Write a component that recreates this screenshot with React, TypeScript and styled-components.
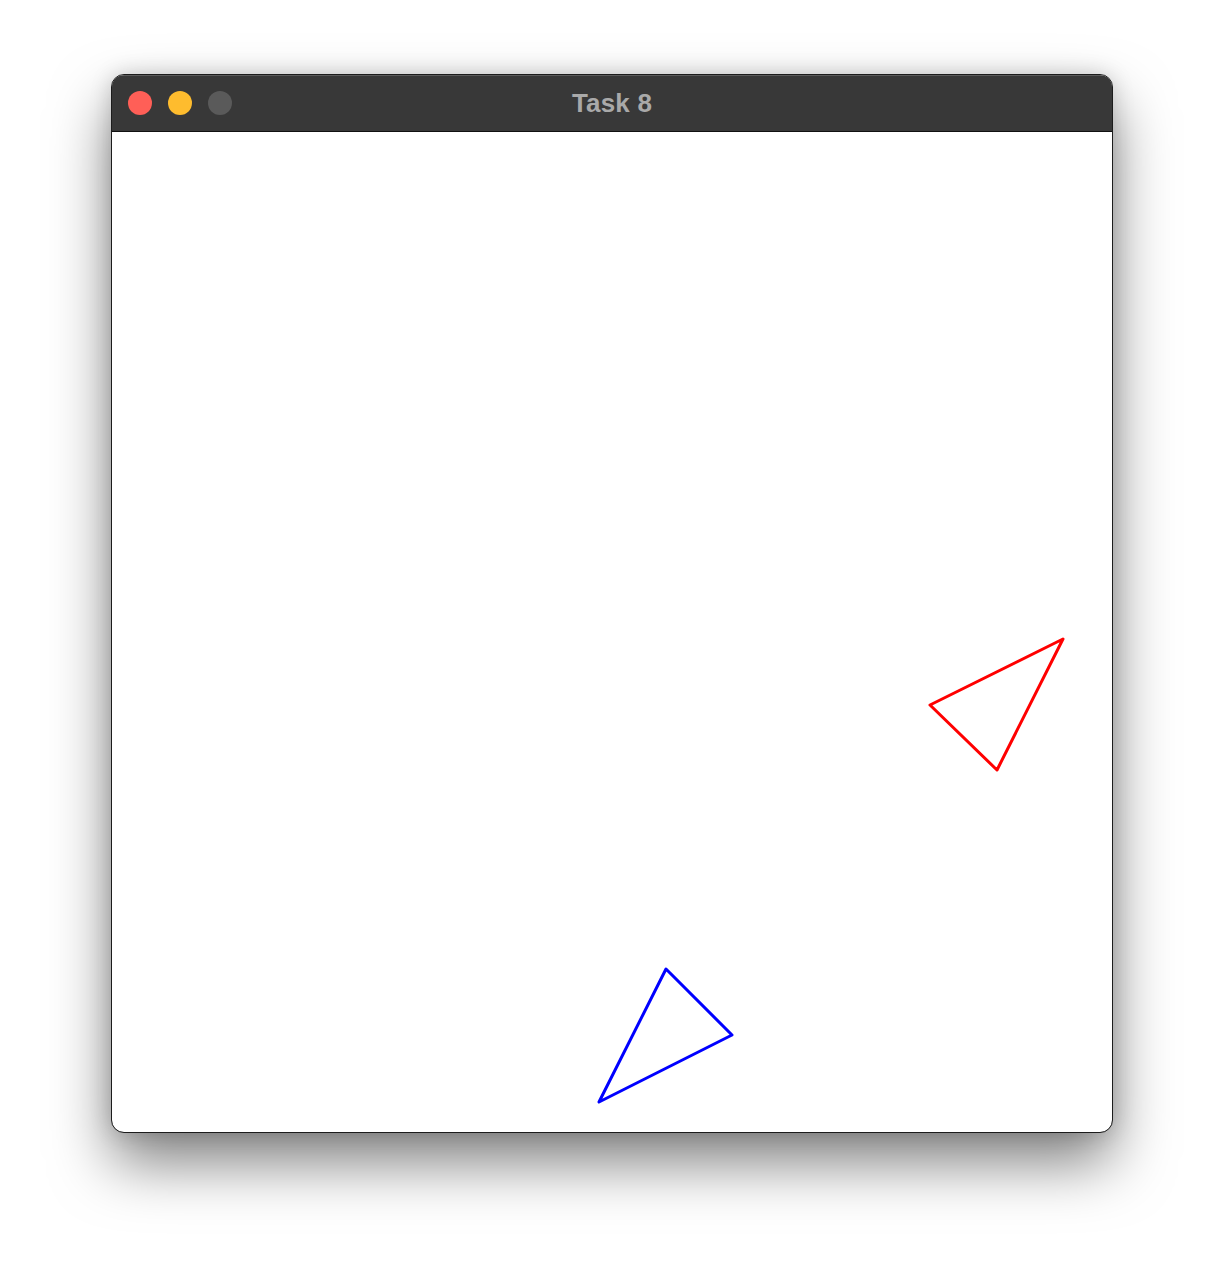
import React from "react";
import styled, { createGlobalStyle } from "styled-components";

const GlobalStyle = createGlobalStyle`
  html, body {
    margin: 0;
    padding: 0;
    background: #ffffff;
  }
`;

const Page = styled.div`
  display: flex;
  justify-content: center;
  align-items: flex-start;
  padding-top: 75px;
  height: 1280px;
  box-sizing: border-box;
  overflow: hidden;
`;

const Window = styled.div`
  width: 1000px;
  display: flex;
  flex-direction: column;
  border-radius: 12px;
  overflow: hidden;
  outline: 1px solid #1c1c1c;
  box-shadow: 0 30px 60px rgba(0, 0, 0, 0.5), 0 0 22px rgba(0, 0, 0, 0.18);
  background: #ffffff;
`;

const TitleBar = styled.div`
  height: 56px;
  position: relative;
  display: flex;
  align-items: center;
  justify-content: center;
  background: #383838;
  border-bottom: 1px solid #111111;
  box-shadow: inset 0 1px 0 rgba(255, 255, 255, 0.18);
`;

const Lights = styled.div`
  position: absolute;
  left: 16px;
  top: 16px;
  display: flex;
  gap: 16px;
`;

const Light = styled.span<{ $color: string }>`
  width: 24px;
  height: 24px;
  border-radius: 50%;
  background: ${(p) => p.$color};
`;

const Title = styled.div`
  font-family: "Liberation Sans", Arial, sans-serif;
  font-weight: 700;
  font-size: 26px;
  color: #a9a9a9;
  letter-spacing: 0.2px;
`;

const Canvas = styled.svg`
  display: block;
  width: 1000px;
  height: 1000px;
`;

const triangles = [
  { color: "#ff0000", points: "951,507 818,573 885,638" },
  { color: "#0000ff", points: "554,837 620,903 487,970" },
];

const App: React.FC = () => {
  return (
    <>
      <GlobalStyle />
      <Page>
        <Window>
          <TitleBar>
            <Lights>
              <Light $color="#ff5f57" />
              <Light $color="#febc2e" />
              <Light $color="#5a5a5a" />
            </Lights>
            <Title>Task 8</Title>
          </TitleBar>
          <Canvas viewBox="0 0 1000 1000">
            {triangles.map((t) => (
              <polygon
                key={t.color}
                points={t.points}
                fill="none"
                stroke={t.color}
                strokeWidth={3}
                strokeLinejoin="round"
              />
            ))}
          </Canvas>
        </Window>
      </Page>
    </>
  );
};

export default App;
